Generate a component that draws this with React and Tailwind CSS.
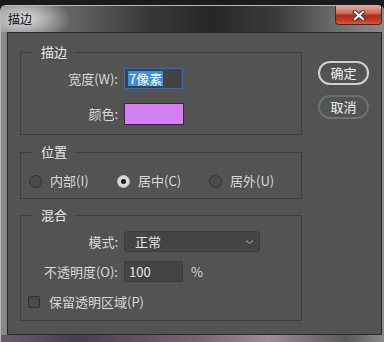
import React from "react";

function Group({ title, className, children }) {
  return (
    <fieldset className={"border border-[#3e3e3e] " + className}>
      <legend className="ml-[12px] px-[8px] text-[13px] leading-[18px] text-[#e8e8e8]">
        {title}
      </legend>
      {children}
    </fieldset>
  );
}

function Radio({ label, checked, className }) {
  return (
    <div className={"flex items-center " + className}>
      {checked ? (
        <span className="flex h-[13px] w-[13px] items-center justify-center rounded-full bg-[#d9d9d9] border border-[#bdbdbd]">
          <span className="h-[5px] w-[5px] rounded-full bg-[#1e1e1e]" />
        </span>
      ) : (
        <span className="h-[13px] w-[13px] rounded-full border border-[#333333] bg-[#4c4c4c]" />
      )}
      <span className="ml-[8px]">{label}</span>
    </div>
  );
}

export default function App() {
  return (
    <div className="h-[342px] w-[384px] overflow-hidden bg-[#1b1b1b] pt-[5px] font-['Noto_Sans_CJK_SC','Noto_Sans',sans-serif] text-[13px] leading-[16px] text-[#d8d8d8]">
      <div className="flex h-[337px] flex-col rounded-t-[6px] border-t border-l border-[#b8b8b8] bg-[linear-gradient(to_right,#8a8a8a,#6a6a6a_8%,#6a6a6a_92%,#8c8c8c)]">
        {/* title bar */}
        <div className="flex h-[26px] shrink-0 justify-between rounded-t-[6px] bg-[radial-gradient(ellipse_46px_22px_at_24px_13px,rgba(225,225,225,0.95),rgba(225,225,225,0)),linear-gradient(to_right,#8e8e8e,#6c6c6c_14%,#3a3a3a_38%,#262626_55%,#3c3c3c_72%,#7a7a7a_92%,#8a8a8a)]">
          <span className="pl-[7px] pt-[4px] text-[12px] leading-[18px] text-[#0e0e0e]">描边</span>
          <div className="mr-[2px] flex h-[19px] w-[47px] items-center justify-center rounded-b-[4px] border border-t-0 border-[#4a2a24] bg-[linear-gradient(to_bottom,#e2aa9c,#cf6a56_40%,#b22c1a_52%,#c23a26_80%,#d65a40)]">
            <svg width="14" height="11" viewBox="0 0 14 11">
              <path d="M3 2 L11 9 M11 2 L3 9" stroke="#3a3a3a" strokeWidth="4.2" strokeLinecap="square" />
              <path d="M3 2 L11 9 M11 2 L3 9" stroke="#ffffff" strokeWidth="2.2" strokeLinecap="square" />
            </svg>
          </div>
        </div>

        {/* client area */}
        <div className="ml-[6px] mr-[2px] flex h-[303px] shrink-0 border border-[#2a2a2a] bg-[#535353] pl-[12px] pt-[10px]">
          <div className="flex w-[282px] flex-col">
            <Group title="描边" className="pb-[9px]">
              <div className="mt-[7px] flex items-center">
                <span className="w-[97px] text-right">宽度(W):</span>
                <div className="ml-[6px] flex h-[21px] w-[59px] items-center border border-[#1f6fd6] bg-[#424242] pl-[3px]">
                  <span className="bg-[#3b8ee6] px-[1px] leading-[15px] text-white">7像素</span>
                </div>
              </div>
              <div className="mt-[14px] flex items-center">
                <span className="w-[97px] text-right">颜色:</span>
                <div className="ml-[6px] h-[22px] w-[60px] border border-[#363036] bg-[#d580f1]" />
              </div>
            </Group>

            <Group title="位置" className="mt-[8px] pb-[9px]">
              <div className="mt-[12px] flex items-center pl-[8px]">
                <Radio label="内部(I)" className="w-[88px]" />
                <Radio label="居中(C)" checked className="w-[92px]" />
                <Radio label="居外(U)" />
              </div>
            </Group>

            <Group title="混合" className="mt-[7px] pb-[10px]">
              <div className="mt-[7px] flex items-center">
                <span className="w-[97px] text-right">模式:</span>
                <div className="ml-[6px] flex h-[21px] w-[136px] items-center justify-between rounded-[3px] border border-[#3c3c3c] bg-[#454545] pl-[10px] pr-[5px] text-[#e6e6e6]">
                  <span>正常</span>
                  <svg width="9" height="6" viewBox="0 0 9 6">
                    <path d="M1 1.5 L4.5 4.5 L8 1.5" fill="none" stroke="#b0b0b0" strokeWidth="1" />
                  </svg>
                </div>
              </div>
              <div className="mt-[9px] flex items-center">
                <span className="w-[97px] text-right">不透明度(O):</span>
                <div className="ml-[6px] flex h-[21px] w-[59px] items-center border border-[#3c3c3c] bg-[#454545] pl-[4px] text-[#e6e6e6]">
                  100
                </div>
                <span className="ml-[8px]">%</span>
              </div>
              <div className="mt-[12px] flex items-center pl-[7px]">
                <span className="h-[12px] w-[12px] rounded-[2px] border border-[#333333] bg-[#4a4a4a]" />
                <span className="ml-[9px]">保留透明区域(P)</span>
              </div>
            </Group>
          </div>

          <div className="ml-[16px] mt-[18px] flex flex-col gap-[10px]">
            <button className="h-[24px] w-[51px] rounded-full border-2 border-[#d0d0d0] text-[13px] text-[#f0f0f0]">
              确定
            </button>
            <button className="h-[24px] w-[51px] rounded-full border-2 border-[#6e6e6e] text-[13px] text-[#f0f0f0]">
              取消
            </button>
          </div>
        </div>

        {/* bottom frame */}
        <div className="h-[8px] shrink-0 bg-[linear-gradient(to_right,#6a5a6e,#4a3e52_20%,#7a6070_50%,#a08a9a_70%,#5a5a5a_90%,#8a8a8a)]" />
      </div>
    </div>
  );
}
